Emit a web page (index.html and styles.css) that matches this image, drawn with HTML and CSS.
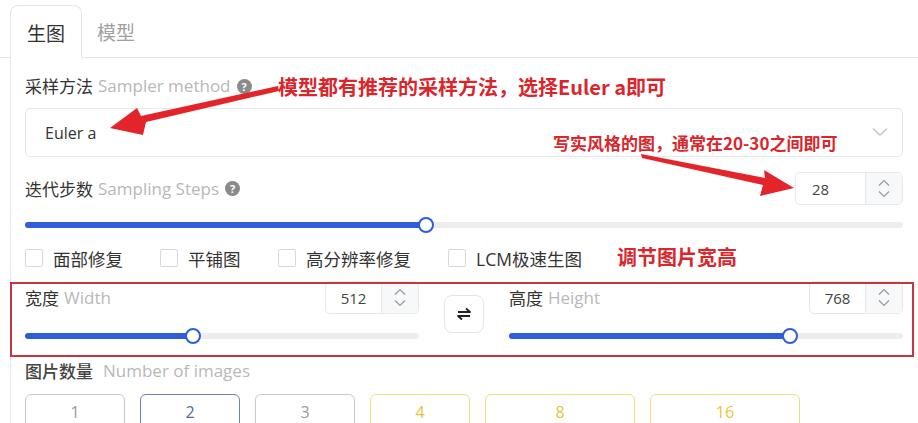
FILE: index.html
```html
<!DOCTYPE html>
<html lang="zh-CN">
<head>
    <meta charset="UTF-8">
    <title>生图设置</title>
    <link rel="stylesheet" href="styles.css">
</head>
<body>
    <div class="page">
        <div class="tabs">
            <div class="tab active">生图</div>
            <div class="tab">模型</div>
        </div>
        <div class="panel">
            <div class="field-label">
                <span class="zh">采样方法</span> <span class="en">Sampler method</span>
                <span class="help">?</span>
            </div>
            <div class="select">
                <span>Euler a</span>
                <svg class="chevron" width="16" height="10" viewBox="0 0 16 10"><path d="M1 1.5 L8 8 L15 1.5" fill="none" stroke="#c4c4c4" stroke-width="1.4"/></svg>
            </div>

            <div class="row-head steps-head">
                <div class="field-label">
                    <span class="zh">迭代步数</span> <span class="en">Sampling Steps</span>
                    <span class="help">?</span>
                </div>
                <div class="num num-wide">
                    <span class="num-value">28</span>
                    <div class="stepper">
                        <svg width="12" height="8" viewBox="0 0 12 8"><path d="M1 6.5 L6 1.5 L11 6.5" fill="none" stroke="#9a9a9a" stroke-width="1.2"/></svg>
                        <svg width="12" height="8" viewBox="0 0 12 8"><path d="M1 1.5 L6 6.5 L11 1.5" fill="none" stroke="#9a9a9a" stroke-width="1.2"/></svg>
                    </div>
                </div>
            </div>
            <div class="slider steps-slider"><div class="fill" style="width: 45.7%"></div><div class="thumb" style="left: 45.7%"></div></div>

            <div class="checks">
                <label class="check c1"><span class="box"></span>面部修复</label>
                <label class="check c2"><span class="box"></span>平铺图</label>
                <label class="check c3"><span class="box"></span>高分辨率修复</label>
                <label class="check"><span class="box"></span>LCM极速生图</label>
            </div>

            <div class="dims">
                <div class="dim">
                    <div class="row-head">
                        <div class="field-label"><span class="zh">宽度</span> <span class="en">Width</span></div>
                        <div class="num">
                            <span class="num-value center">512</span>
                            <div class="stepper">
                                <svg width="12" height="8" viewBox="0 0 12 8"><path d="M1 6.5 L6 1.5 L11 6.5" fill="none" stroke="#9a9a9a" stroke-width="1.2"/></svg>
                                <svg width="12" height="8" viewBox="0 0 12 8"><path d="M1 1.5 L6 6.5 L11 1.5" fill="none" stroke="#9a9a9a" stroke-width="1.2"/></svg>
                            </div>
                        </div>
                    </div>
                    <div class="slider"><div class="fill" style="width: 42.6%"></div><div class="thumb" style="left: 42.6%"></div></div>
                </div>
                <div class="swap">
                    <svg width="20" height="20" viewBox="0 0 20 20"><path d="M4 8 H16 L12 4.5 M16 12 H4 L8 15.5" fill="none" stroke="#222" stroke-width="1.8" stroke-linejoin="round"/></svg>
                </div>
                <div class="dim">
                    <div class="row-head">
                        <div class="field-label"><span class="zh">高度</span> <span class="en">Height</span></div>
                        <div class="num">
                            <span class="num-value center">768</span>
                            <div class="stepper">
                                <svg width="12" height="8" viewBox="0 0 12 8"><path d="M1 6.5 L6 1.5 L11 6.5" fill="none" stroke="#9a9a9a" stroke-width="1.2"/></svg>
                                <svg width="12" height="8" viewBox="0 0 12 8"><path d="M1 1.5 L6 6.5 L11 1.5" fill="none" stroke="#9a9a9a" stroke-width="1.2"/></svg>
                            </div>
                        </div>
                    </div>
                    <div class="slider"><div class="fill" style="width: 71.4%"></div><div class="thumb" style="left: 71.4%"></div></div>
                </div>
            </div>

            <div class="field-label count-label">
                <span class="zh strong">图片数量</span> <span class="en">Number of images</span>
            </div>
            <div class="counts">
                <button class="count">1</button>
                <button class="count picked">2</button>
                <button class="count">3</button>
                <button class="count gold">4</button>
                <button class="count gold wide">8</button>
                <button class="count gold wide">16</button>
            </div>
        </div>

        <!-- annotations drawn over the screenshot -->
        <div class="note note-sampler">模型都有推荐的采样方法，选择Euler a即可</div>
        <div class="note note-steps">写实风格的图，通常在20-30之间即可</div>
        <div class="note note-size">调节图片宽高</div>
        <div class="mark-box"></div>
        <svg class="arrows" width="918" height="423" viewBox="0 0 918 423">
            <polygon points="278,86 279,91 146,122 143,135 110,128 137,108 141,116" fill="#e3242b"/>
            <polygon points="641,154 642,158 763,185 760,196 794,188 764,170 765,178" fill="#e3242b"/>
        </svg>
    </div>
</body>
</html>
```

FILE: styles.css
```css
/* Base */
body, html {
    margin: 0;
    padding: 0;
}

body {
    font-family: "Open Sans", "Noto Sans CJK SC", sans-serif;
    background-color: #fff;
    color: #333;
    overflow: hidden;
}

.page {
    position: relative;
    width: 918px;
    height: 423px;
    overflow: hidden;
}

/* Tabs */
.tabs {
    display: flex;
    padding: 5px 0 0 10px;
    border-bottom: 1px solid #e6e6e6;
    height: 52px;
}

.tab {
    width: 68px;
    height: 52px;
    display: flex;
    align-items: center;
    justify-content: center;
    font-size: 19px;
    color: #a0a0a0;
    font-family: "Noto Sans CJK SC", sans-serif;
}

.tab.active {
    width: 70px;
    color: #333;
    border: 1px solid #e6e6e6;
    border-bottom: 1px solid #fff;
    border-radius: 8px 8px 0 0;
    margin-bottom: -1px;
    background-color: #fff;
}

/* Panel */
.panel {
    margin-left: 10px;
    border-left: 1px solid #e6e6e6;
    padding: 16px 15px 0 14px;
    height: 400px;
}

.field-label {
    display: flex;
    align-items: center;
    font-size: 17px;
    line-height: 24px;
    height: 24px;
}

.field-label .zh {
    color: #333;
    font-family: "Noto Sans CJK SC", sans-serif;
}

.field-label .zh.strong {
    color: #444;
    font-weight: 500;
}

.field-label .en {
    color: #b8b8b8;
    margin-left: 5px;
}

.help {
    display: inline-flex;
    align-items: center;
    justify-content: center;
    width: 15px;
    height: 15px;
    border-radius: 50%;
    background-color: #8a8a8a;
    color: #fff;
    font-size: 11px;
    font-weight: bold;
    margin-left: 6px;
    line-height: 1;
}

/* Select */
.select {
    margin-top: 10px;
    height: 47px;
    border: 1px solid #e8e8e8;
    border-radius: 5px;
    display: flex;
    align-items: center;
    justify-content: space-between;
    padding: 0 14px 0 19px;
    font-size: 16px;
    color: #333;
}

.chevron {
    margin-top: -2px;
}

/* Number rows */
.row-head {
    display: flex;
    align-items: center;
    justify-content: space-between;
}

.steps-head {
    margin-top: 15px;
}

.num {
    display: flex;
    height: 31px;
    width: 92px;
    border: 1px solid #e8e8e8;
    border-radius: 5px;
    overflow: hidden;
    font-size: 15px;
    color: #444;
}

.num-wide {
    width: 106px;
}

.num-value {
    flex: 1;
    display: flex;
    align-items: center;
    padding-left: 16px;
}

.num-value.center {
    justify-content: center;
    padding-left: 0;
}

.stepper {
    width: 36px;
    border-left: 1px solid #e8e8e8;
    background-color: #f7f8fa;
    display: flex;
    flex-direction: column;
    align-items: center;
    justify-content: center;
    gap: 3px;
}

/* Sliders */
.slider {
    position: relative;
    height: 6px;
    border-radius: 3px;
    background-color: #ededed;
}

.steps-slider {
    margin-top: 17px;
}

.slider .fill {
    height: 100%;
    border-radius: 3px;
    background-color: #2f5ddb;
}

.slider .thumb {
    position: absolute;
    top: 50%;
    width: 12px;
    height: 12px;
    margin: -8px 0 0 -8px;
    border: 2px solid #2f5ddb;
    border-radius: 50%;
    background-color: #fff;
}

/* Checkboxes */
.checks {
    display: flex;
    margin-top: 19px;
    height: 22px;
    align-items: center;
}

.check {
    display: flex;
    align-items: center;
    font-size: 17.5px;
    font-family: "Open Sans", "Noto Sans CJK SC", sans-serif;
    color: #333;
}

.check.c1 {
    width: 135px;
}

.check.c2 {
    width: 118px;
}

.check.c3 {
    width: 170px;
}

.box {
    width: 16px;
    height: 16px;
    border: 1px solid #d9d9d9;
    border-radius: 2px;
    margin-right: 10px;
}

/* Width / height */
.dims {
    display: flex;
    align-items: center;
    margin-top: 12px;
    gap: 25px;
}

.dim {
    flex: 1;
}

.dim .row-head {
    height: 33px;
}

.dim .slider {
    margin-top: 19px;
}

.swap {
    width: 38px;
    height: 36px;
    border: 1px solid #e4e4e4;
    border-radius: 8px;
    display: flex;
    align-items: center;
    justify-content: center;
    margin-top: 8px;
}

/* Image count */
.count-label {
    margin-top: 20px;
}

.count-label .en {
    margin-left: 10px;
}

.counts {
    display: flex;
    gap: 15px;
    margin-top: 11px;
}

.count {
    width: 100px;
    height: 42px;
    border: 1px solid #c9c9c9;
    border-radius: 6px;
    background-color: #fff;
    color: #9a9a9a;
    font-family: "Open Sans", sans-serif;
    font-size: 16px;
    padding: 0 0 6px;
}

.count.picked {
    border-color: #6c86aa;
    color: #4f6d9c;
}

.count.gold {
    border-color: #efdc84;
    color: #e4c43c;
}

.count.wide {
    width: 150px;
}

/* Annotations */
.note {
    position: absolute;
    color: #d9262c;
    font-weight: bold;
    font-family: "Noto Sans CJK SC", sans-serif;
    white-space: nowrap;
}

.note-sampler {
    left: 278px;
    top: 72px;
    font-size: 20px;
}

.note-steps {
    left: 553px;
    top: 130px;
    font-size: 17px;
}

.note-size {
    left: 617px;
    top: 242px;
    font-size: 20px;
}

.mark-box {
    position: absolute;
    left: 10px;
    top: 282px;
    width: 900px;
    height: 71px;
    border: 2px solid #c8353c;
}

.arrows {
    position: absolute;
    left: 0;
    top: 0;
    pointer-events: none;
}
```
